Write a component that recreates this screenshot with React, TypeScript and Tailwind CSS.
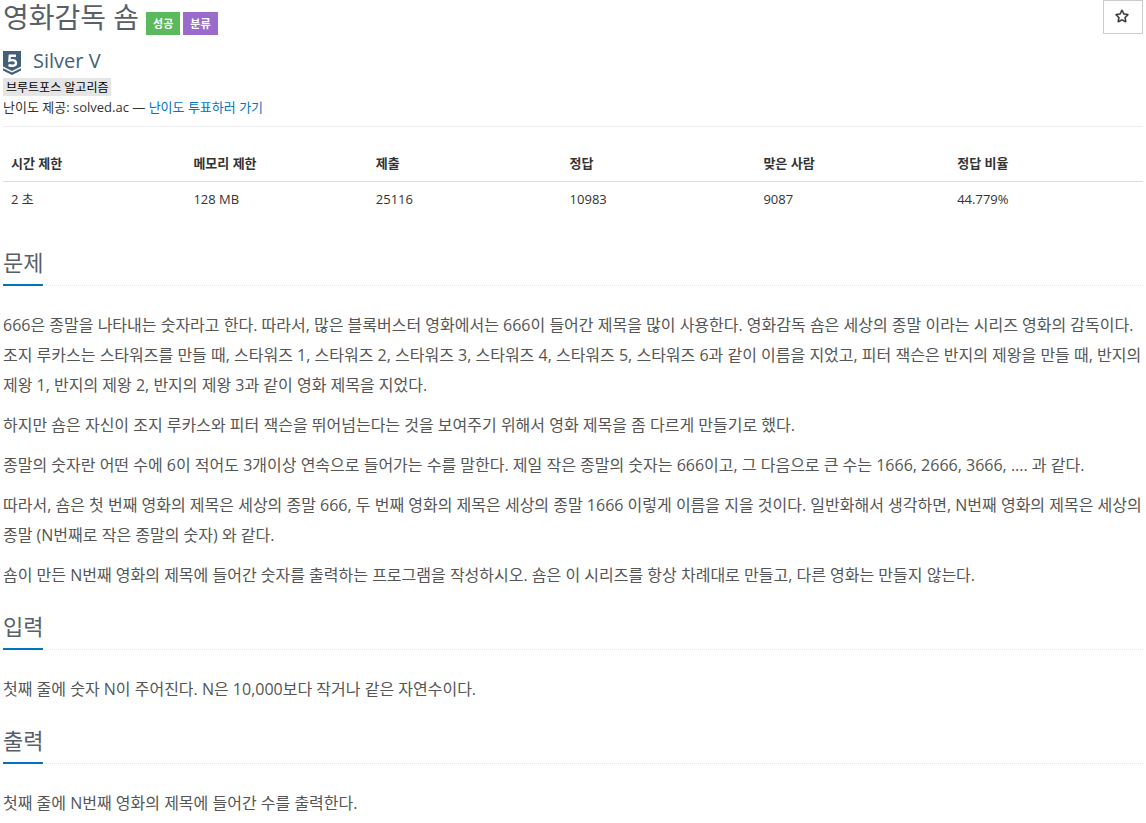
import type { ReactNode } from "react";
import { FaRegStar } from "react-icons/fa";

const stats = [
  { label: "시간 제한", value: "2 초", width: "w-[16%]" },
  { label: "메모리 제한", value: "128 MB", width: "w-[16%]" },
  { label: "제출", value: "25116", width: "w-[17%]" },
  { label: "정답", value: "10983", width: "w-[17%]" },
  { label: "맞은 사람", value: "9087", width: "w-[17%]" },
  { label: "정답 비율", value: "44.779%", width: "w-[17%]" },
];

const description = [
  "666은 종말을 나타내는 숫자라고 한다. 따라서, 많은 블록버스터 영화에서는 666이 들어간 제목을 많이 사용한다. 영화감독 숌은 세상의 종말 이라는 시리즈 영화의 감독이다. 조지 루카스는 스타워즈를 만들 때, 스타워즈 1, 스타워즈 2, 스타워즈 3, 스타워즈 4, 스타워즈 5, 스타워즈 6과 같이 이름을 지었고, 피터 잭슨은 반지의 제왕을 만들 때, 반지의 제왕 1, 반지의 제왕 2, 반지의 제왕 3과 같이 영화 제목을 지었다.",
  "하지만 숌은 자신이 조지 루카스와 피터 잭슨을 뛰어넘는다는 것을 보여주기 위해서 영화 제목을 좀 다르게 만들기로 했다.",
  "종말의 숫자란 어떤 수에 6이 적어도 3개이상 연속으로 들어가는 수를 말한다. 제일 작은 종말의 숫자는 666이고, 그 다음으로 큰 수는 1666, 2666, 3666, .... 과 같다.",
  "따라서, 숌은 첫 번째 영화의 제목은 세상의 종말 666, 두 번째 영화의 제목은 세상의 종말 1666 이렇게 이름을 지을 것이다. 일반화해서 생각하면, N번째 영화의 제목은 세상의 종말 (N번째로 작은 종말의 숫자) 와 같다.",
  "숌이 만든 N번째 영화의 제목에 들어간 숫자를 출력하는 프로그램을 작성하시오. 숌은 이 시리즈를 항상 차례대로 만들고, 다른 영화는 만들지 않는다.",
];

function TierIcon() {
  return (
    <svg viewBox="0 0 18 24" className="h-6 w-[18px]" aria-hidden="true">
      <path d="M0 0h18v15.500l-9 4.500-9-4.500z" fill="#435f7a" />
      <path d="M0 17.300l9 4.300 9-4.300v2.200L9 24l-9-4.500z" fill="#435f7a" />
      <path d="M13 4.800H6.800l-.4 4.800c3.400-1 6.600-.2 6.600 2.400 0 2.900-3.700 3.400-7.500 2" fill="none" stroke="#fff" strokeWidth="2.4" />
    </svg>
  );
}

function Section({ title, children }: { title: string; children: ReactNode }) {
  return (
    <section className="mb-[18px]">
      <div className="mb-6 flex border-b border-dotted border-[#e4e9f0]">
        <h2 className="-mb-px border-b-2 border-[#0076c0] pb-1 text-[22px] leading-9 text-[#585f69]">{title}</h2>
      </div>
      <div className="space-y-2.5 text-base leading-[30px] break-keep text-[#555]">{children}</div>
    </section>
  );
}

export default function App() {
  return (
    <main className="bg-white px-[3px] pb-1 font-['Open_Sans','Noto_Sans_CJK_KR',sans-serif] text-[13px] text-[#333]">
      <header className="flex items-start justify-between">
        <div className="flex items-start gap-[3px]">
          <h1 className="mr-1 text-[28px] leading-[34px] text-[#585f69]">영화감독 숌</h1>
          <span className="mt-3 bg-[#5cb85c] px-[7px] text-[11px] leading-[23px] font-bold text-white">성공</span>
          <span className="mt-3 bg-[#9b6bcc] px-[7px] text-[11px] leading-[23px] font-bold text-white">분류</span>
        </div>
        <button type="button" aria-label="즐겨찾기" className="flex h-[34px] w-10 justify-start border border-[#ccc] bg-white px-[11px] pt-2">
          <FaRegStar className="size-3.5" strokeWidth={16} />
        </button>
      </header>

      <div className="mt-[11px] mb-0.5 flex items-start gap-3 text-xl leading-8 text-[#435f7a]">
        <div className="pt-[5px]">
          <TierIcon />
        </div>
        <span className="leading-[30px]">Silver V</span>
      </div>
      <div className="flex">
        <span className="bg-[#e5e5e5] px-[3px] pt-0.5 text-xs leading-4 text-black">브루트포스 알고리즘</span>
      </div>
      <p className="leading-[22px]">
        난이도 제공: solved.ac —{" "}
        <a href="#vote" className="text-[#0076c0]">난이도 투표하러 가기</a>
      </p>
      <hr className="mt-2 border-[#eee]" />

      <table className="mt-[18px] mb-7 w-full table-fixed text-left">
        <thead>
          <tr className="border-b border-[#ddd]">
            {stats.map((s) => (
              <th key={s.label} className={`${s.width} p-2 leading-5 font-bold`}>{s.label}</th>
            ))}
          </tr>
        </thead>
        <tbody>
          <tr>
            {stats.map((s) => (
              <td key={s.label} className="px-2 py-[7px] leading-5">{s.value}</td>
            ))}
          </tr>
        </tbody>
      </table>

      <Section title="문제">
        {description.map((text) => (
          <p key={text}>{text}</p>
        ))}
      </Section>
      <Section title="입력">
        <p>첫째 줄에 숫자 N이 주어진다. N은 10,000보다 작거나 같은 자연수이다.</p>
      </Section>
      <Section title="출력">
        <p>첫째 줄에 N번째 영화의 제목에 들어간 수를 출력한다.</p>
      </Section>
    </main>
  );
}
